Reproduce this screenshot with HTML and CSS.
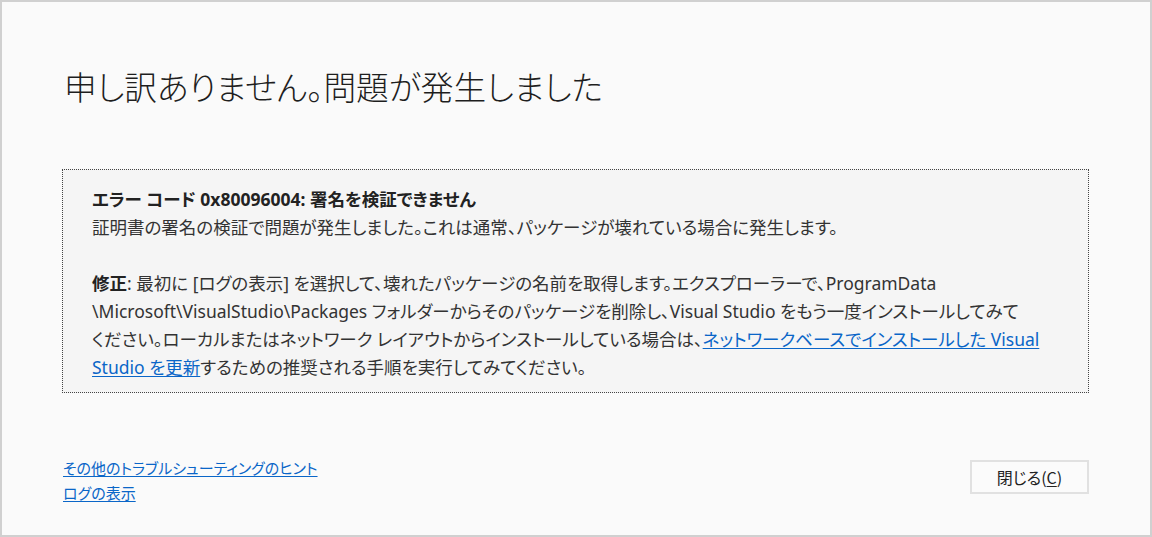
FILE: index.html
```html
<!DOCTYPE html>
<html lang="ja">
<head>
<meta charset="utf-8">
<link rel="stylesheet" href="styles.css">
</head>
<body>
<div class="window">
  <h1 class="title">申し訳ありません。問題が発生しました</h1>
  <div class="box">
    <p class="line"><b>エラー コード 0x80096004: 署名を検証できません</b><br>証明書の署名の検証で問題が発生しました。これは通常、パッケージが壊れている場合に発生します。</p>
    <p class="line fix"><b>修正</b>: 最初に [ログの表示] を選択して、壊れたパッケージの名前を取得します。エクスプローラーで、ProgramData<br>\Microsoft\VisualStudio\Packages フォルダーからそのパッケージを削除し、Visual Studio をもう一度インストールしてみて<br>ください。ローカルまたはネットワーク レイアウトからインストールしている場合は、<a class="link" href="#">ネットワークベースでインストールした Visual<br>Studio を更新</a>するための推奨される手順を実行してみてください。</p>
  </div>
  <div class="footer">
    <div class="links">
      <a class="link small" href="#">その他のトラブルシューティングのヒント</a>
      <a class="link small" href="#">ログの表示</a>
    </div>
    <button class="btn">閉じる(<u>C</u>)</button>
  </div>
</div>
</body>
</html>
```
FILE: styles.css
```css
html, body {
  margin: 0;
  padding: 0;
}
body {
  font-family: "Noto Sans", "Noto Sans CJK JP", sans-serif;
  font-feature-settings: "palt" 1;
  color: #333;
}
.window {
  box-sizing: border-box;
  width: 1152px;
  height: 537px;
  border: 2px solid #d0d0d0;
  background: #fafafa;
  padding: 0 61px 0 60px;
  display: flex;
  flex-direction: column;
}
.title {
  margin: 62px 0 0 2px;
  font-family: "Noto Sans CJK JP", sans-serif;
  font-feature-settings: "palt" 1;
  font-weight: 300;
  font-size: 32.7px;
  line-height: 44px;
  color: #1e1e1e;
}
.box {
  margin-top: 61px;
  border: 1px dotted #444;
  background: #f5f5f5;
  padding: 15px 10px 11px 29px;
  height: 224px;
  box-sizing: border-box;
}
.line {
  margin: 0;
  font-size: 17.5px;
  line-height: 28px;
  white-space: nowrap;
  color: #333;
}
.line b {
  font-weight: 700;
  color: #222;
}
.fix {
  margin-top: 28px;
}
.link {
  color: #0a66c8;
  text-decoration: underline;
  text-underline-offset: 2px;
}
.footer {
  margin-top: 63px;
  display: flex;
  justify-content: space-between;
  align-items: flex-start;
}
.links {
  display: flex;
  flex-direction: column;
  margin-left: 1px;
}
.small {
  font-size: 15px;
  line-height: 25px;
}
.btn {
  margin-top: 4px;
  width: 119px;
  height: 34px;
  border: 2px solid #e1e1e1;
  background: #fbfbfb;
  font-family: "Noto Sans CJK JP", sans-serif;
  font-feature-settings: "palt" 1;
  font-size: 16px;
  color: #222;
  padding: 0;
}
.btn u {
  text-underline-offset: 2px;
}
```
